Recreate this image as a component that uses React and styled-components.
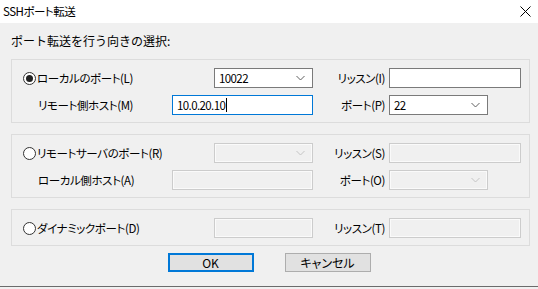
import React from "react";
import styled, { createGlobalStyle } from "styled-components";

const Global = createGlobalStyle`
  html, body { margin: 0; padding: 0; background: #f0f0f0; }
  body { font-family: "Noto Sans CJK JP", "Noto Sans", sans-serif; font-size: 12px; color: #000; }
  * { box-sizing: border-box; }
`;

const Window = styled.div`
  width: 538px;
  height: 289px;
  display: flex;
  flex-direction: column;
  background: #f0f0f0;
  overflow: hidden;
`;

const TitleBar = styled.div`
  height: 23px;
  flex: none;
  background: #fff;
  display: flex;
  align-items: center;
  justify-content: space-between;
  padding: 0 7px 1px 3px;
  font-size: 11.5px;
  font-feature-settings: "palt";
  letter-spacing: -0.5px;
`;

const Body = styled.div`
  flex: 1;
  display: flex;
  flex-direction: column;
  padding: 0 0 0 11px;
`;

const Heading = styled.div`
  height: 36px;
  line-height: 36px;
`;

const Group = styled.div`
  width: 519px;
  border: 1px solid #dcdcdc;
  padding: 8px 8px 7px 11px;
  margin-bottom: ${(p) => p.$mb ?? 11}px;
  display: grid;
  grid-template-columns: 149px 42px 99px 76px 132px;
  grid-auto-rows: 20px;
  row-gap: 7px;
  align-items: center;
  font-size: 11.5px;
  font-feature-settings: "palt";
  letter-spacing: -0.4px;
`;

const RadioLabel = styled.label`
  grid-column: span ${(p) => p.$span ?? 1};
  display: flex;
  align-items: center;
  gap: 1px;
  white-space: nowrap;
`;

const RadioCircle = styled.span`
  width: 13px;
  height: 13px;
  border-radius: 50%;
  border: 1px solid #333;
  background: #fff;
  display: flex;
  align-items: center;
  justify-content: center;
  &::after {
    content: "";
    width: 7px;
    height: 7px;
    border-radius: 50%;
    background: ${(p) => (p.$checked ? "#222" : "transparent")};
  }
`;

const Label = styled.span`
  white-space: nowrap;
  padding-left: ${(p) => p.$indent ?? 0}px;
  text-align: ${(p) => (p.$right ? "right" : "left")};
  padding-right: ${(p) => (p.$right ? 4 : 0)}px;
`;

const Box = styled.div`
  grid-column: span ${(p) => p.$span ?? 1};
  width: ${(p) => p.$w}px;
  height: 20px;
  border: 1px solid ${(p) => (p.$focus ? "#0078d7" : p.$disabled ? "#cccccc" : "#7a7a7a")};
  background: ${(p) => (p.$disabled ? "#f0f0f0" : "#fff")};
  box-shadow: ${(p) => (p.$disabled ? "inset 0 0 0 1px #fafafa" : "none")};
  display: flex;
  align-items: center;
  padding: 0 3px 0 4px;
  font-size: 11.5px;
  letter-spacing: -0.6px;
`;

const BoxText = styled.span`
  flex: 1;
  display: flex;
  align-items: center;
`;

const Caret = styled.span`
  width: 1px;
  height: 14px;
  background: #000;
  margin-left: 1px;
`;

const Chevron = ({ disabled }) => (
  <svg width="9" height="6" viewBox="0 0 9 6" style={{ marginRight: 4 }}>
    <path d="M0.5 1 L4.5 5 L8.5 1" fill="none" stroke={disabled ? "#c4c4c4" : "#606060"} strokeWidth="1" />
  </svg>
);

const Buttons = styled.div`
  display: flex;
  justify-content: center;
  gap: 31px;
  padding-right: 11px;
  margin-top: -2px;
`;

const Button = styled.button`
  width: 86px;
  height: 19px;
  padding: 0;
  background: #e1e1e1;
  border: ${(p) => (p.$default ? "2px solid #0078d7" : "1px solid #adadad")};
  font-family: inherit;
  font-size: 12px;
  font-feature-settings: "palt";
  color: #000;
  display: flex;
  align-items: center;
  justify-content: center;
`;

const BottomLine = styled.div`
  margin-top: auto;
  height: 1px;
  background: #6b6b6b;
  margin-bottom: 2px;
  margin-left: -11px;
`;

const Close = () => (
  <svg width="11" height="11" viewBox="0 0 11 11">
    <path d="M0.5 0.5 L10.5 10.5 M10.5 0.5 L0.5 10.5" stroke="#000" strokeWidth="1" />
  </svg>
);

const Combo = ({ w, value, disabled, span }) => (
  <Box $w={w} $disabled={disabled} $span={span}>
    <BoxText>{value}</BoxText>
    <Chevron disabled={disabled} />
  </Box>
);

export default function App() {
  return (
    <>
      <Global />
      <Window>
        <TitleBar>
          <span>SSHポート転送</span>
          <Close />
        </TitleBar>
        <Body>
          <Heading>ポート転送を行う向きの選択:</Heading>
          <Group>
            <RadioLabel $span={2}>
              <RadioCircle $checked />
              ローカルのポート(L)
            </RadioLabel>
            <Combo w={99} value="10022" />
            <Label $right>リッスン(I)</Label>
            <Box $w={132} />
            <Label $indent={15}>リモート側ホスト(M)</Label>
            <Box $w={141} $span={2} $focus>
              <BoxText>
                10.0.20.10
                <Caret />
              </BoxText>
            </Box>
            <Label $right>ポート(P)</Label>
            <Combo w={99} value="22" />
          </Group>
          <Group>
            <RadioLabel $span={2}>
              <RadioCircle />
              リモートサーバのポート(R)
            </RadioLabel>
            <Combo w={99} disabled />
            <Label $right>リッスン(S)</Label>
            <Box $w={132} $disabled />
            <Label $indent={15}>ローカル側ホスト(A)</Label>
            <Box $w={141} $span={2} $disabled />
            <Label $right>ポート(O)</Label>
            <Combo w={99} disabled />
          </Group>
          <Group $mb={9}>
            <RadioLabel $span={2}>
              <RadioCircle />
              ダイナミックポート(D)
            </RadioLabel>
            <Box $w={99} $disabled />
            <Label $right>リッスン(T)</Label>
            <Box $w={132} $disabled />
          </Group>
          <Buttons>
            <Button $default>OK</Button>
            <Button>キャンセル</Button>
          </Buttons>
          <BottomLine />
        </Body>
      </Window>
    </>
  );
}
